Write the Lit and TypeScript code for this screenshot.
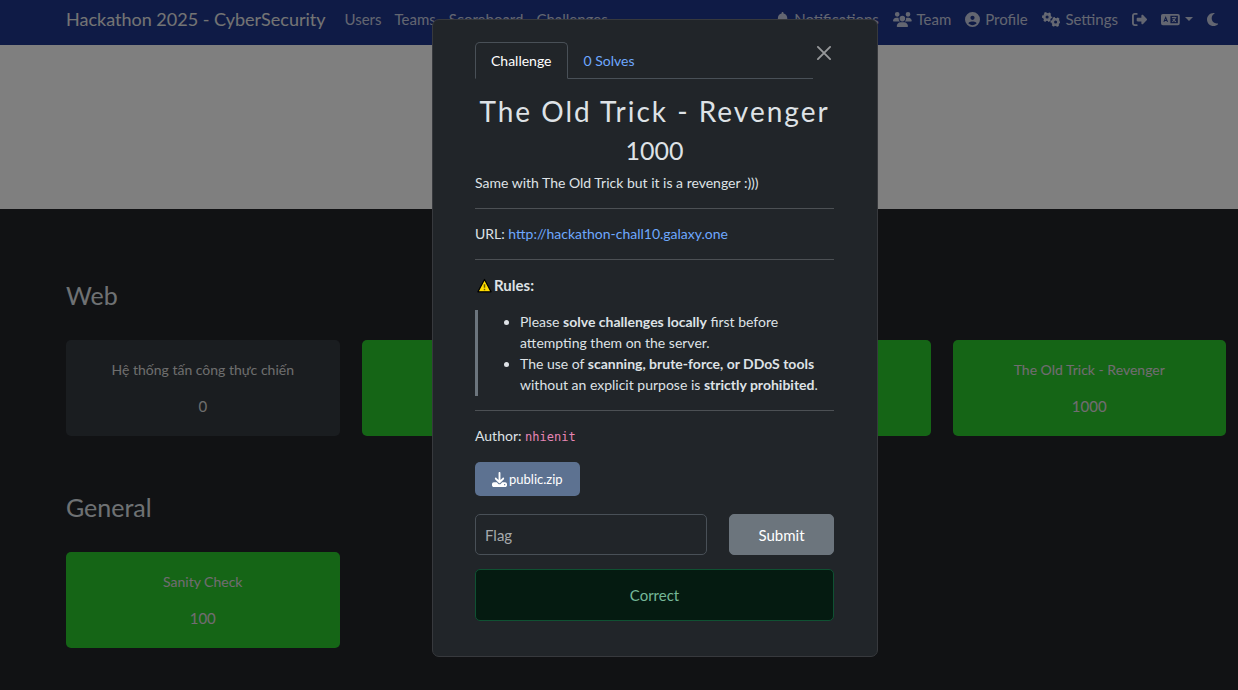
import { LitElement, html, css, svg, nothing } from "lit";
import { customElement, property } from "lit/decorators.js";

type Icon = { w: number; body: unknown };

const gear = (cx: number, cy: number) => svg`
  <circle cx=${cx} cy=${cy} r="95" fill="none" stroke="currentColor" stroke-width="84"></circle>
  <circle cx=${cx} cy=${cy} r="148" fill="none" stroke="currentColor" stroke-width="52"
    pathLength="12" stroke-dasharray="1 1" stroke-dashoffset="0.5"></circle>`;

const ICONS: Record<string, Icon> = {
  bell: {
    w: 448,
    body: svg`<path d="M224 0c-17.7 0-32 14.3-32 32V51.2C119 66 64 130.6 64 208v18.8c0 47-17.3 92.4-48.5 127.6l-7.4 8.3c-8.4 9.4-10.4 22.9-5.3 34.4S19.4 416 32 416H416c12.6 0 24-7.4 29.2-18.9s3.1-25-5.3-34.4l-7.4-8.3C401.3 319.2 384 273.9 384 226.8V208c0-77.4-55-142-128-156.8V32c0-17.7-14.3-32-32-32zm45.3 493.3c12-12 18.7-28.3 18.7-45.3H224 160c0 17 6.7 33.3 18.7 45.3s28.3 18.7 45.3 18.7s33.3-6.7 45.3-18.7z"></path>`,
  },
  users: {
    w: 640,
    body: svg`<path d="M144 0a80 80 0 1 1 0 160A80 80 0 1 1 144 0zM512 0a80 80 0 1 1 0 160A80 80 0 1 1 512 0zM0 298.7C0 239.8 47.8 192 106.7 192h42.7c15.9 0 31 3.5 44.6 9.7c-1.3 7.2-1.9 14.7-1.9 22.3c0 38.2 16.8 72.5 43.3 96c-.2 0-.4 0-.7 0H21.3C9.6 320 0 310.4 0 298.7zM405.3 320c-.2 0-.4 0-.7 0c26.6-23.5 43.3-57.8 43.3-96c0-7.6-.7-15-1.9-22.3c13.6-6.3 28.7-9.7 44.6-9.7h42.7C592.2 192 640 239.8 640 298.7c0 11.8-9.6 21.3-21.3 21.3H405.3zM224 224a96 96 0 1 1 192 0 96 96 0 1 1-192 0zM128 485.3C128 411.7 187.7 352 261.3 352H378.7C452.3 352 512 411.7 512 485.3c0 14.7-11.9 26.7-26.7 26.7H154.7c-14.7 0-26.7-11.9-26.7-26.7z"></path>`,
  },
  profile: {
    w: 512,
    body: svg`<path d="M399 384.2C376.9 345.8 335.4 320 288 320H224c-47.4 0-88.9 25.8-111 64.2c35.2 39.2 86.2 63.8 143 63.8s107.8-24.7 143-63.8zM0 256a256 256 0 1 1 512 0A256 256 0 1 1 0 256zm256 16a72 72 0 1 0 0-144 72 72 0 1 0 0 144z"></path>`,
  },
  gears: { w: 640, body: svg`${gear(174, 172)}${gear(464, 340)}` },
  signout: {
    w: 512,
    body: svg`<path d="M377.9 105.9L500.7 228.7c7.2 7.2 11.3 17.1 11.3 27.3s-4.1 20.1-11.3 27.3L377.9 406.1c-6.4 6.4-15 9.9-24 9.9c-18.7 0-33.9-15.2-33.9-33.9l0-62.1-128 0c-17.7 0-32-14.3-32-32l0-64c0-17.7 14.3-32 32-32l128 0 0-62.1c0-18.7 15.2-33.9 33.9-33.9c9 0 17.6 3.6 24 9.9zM160 96L96 96c-17.7 0-32 14.3-32 32l0 256c0 17.7 14.3 32 32 32l64 0c17.7 0 32 14.3 32 32s-14.3 32-32 32l-64 0c-53 0-96-43-96-96L0 128C0 75 43 32 96 32l64 0c17.7 0 32 14.3 32 32s-14.3 32-32 32z"></path>`,
  },
  language: {
    w: 640,
    body: svg`
      <path fill-rule="evenodd" d="M64 64h512a64 64 0 0 1 64 64v256a64 64 0 0 1-64 64H64a64 64 0 0 1-64-64V128a64 64 0 0 1 64-64zM320 128v256h256V128z"></path>
      <path class="cut" d="M98 336l62-154 62 154M122 292h76"></path>
      <path class="line" d="M372 190h152M448 160v30M492 196c-14 62-52 112-106 138M400 230c22 44 60 82 112 104"></path>`,
  },
  moon: {
    w: 384,
    body: svg`<path d="M223.5 32C100 32 0 132.3 0 256S100 480 223.5 480c60.6 0 115.5-24.2 155.8-63.4c5-4.9 6.3-12.5 3.1-18.7s-10.1-9.7-17-8.5c-9.8 1.7-19.8 2.6-30.1 2.6c-96.9 0-175.5-78.8-175.5-176c0-65.8 36-123.1 89.3-153.3c6.1-3.5 9.2-10.5 7.7-17.3s-7.3-11.9-14.3-12.5c-6.3-.5-12.6-.8-19-.8z"></path>`,
  },
  download: {
    w: 512,
    body: svg`<path d="M288 32c0-17.7-14.3-32-32-32s-32 14.3-32 32V274.7l-73.4-73.4c-12.5-12.5-32.8-12.5-45.3 0s-12.5 32.8 0 45.3l128 128c12.5 12.5 32.8 12.5 45.3 0l128-128c12.5-12.5 12.5-32.8 0-45.3s-32.8-12.5-45.3 0L288 274.7V32zM64 352c-35.3 0-64 28.7-64 64v32c0 35.3 28.7 64 64 64H448c35.3 0 64-28.7 64-64V416c0-35.3-28.7-64-64-64H346.5l-45.3 45.3c-25 25-65.5 25-90.5 0L165.5 352H64zm368 56a24 24 0 1 1 0 48 24 24 0 1 1 0-48z"></path>`,
  },
  warning: {
    w: 512,
    body: svg`
      <path d="M256 50L480 470H32z" fill="#ffdd00" stroke="#000" stroke-width="44" stroke-linejoin="round"></path>
      <path d="M256 210v120M256 370v50" fill="none" stroke="#6b5c00" stroke-width="52"></path>`,
  },
};

@customElement("ui-icon")
class UiIcon extends LitElement {
  static styles = css`
    :host { display: inline-flex; }
    svg { display: block; height: 15px; fill: currentColor; }
    .cut { fill: none; stroke: var(--icon-cut, #1f378d); stroke-width: 36; }
    .line { fill: none; stroke: currentColor; stroke-width: 36; }
  `;
  @property() name = "bell";
  render() {
    const icon = ICONS[this.name];
    return html`<svg viewBox="0 0 ${icon.w} 512" aria-hidden="true">${icon.body}</svg>`;
  }
}

@customElement("nav-bar")
class NavBar extends LitElement {
  static styles = css`
    :host { display: block; background: #1f378d; }
    nav {
      display: flex; align-items: center; height: 45px; box-sizing: border-box;
      padding: 0 20px 7px 66px; white-space: nowrap;
    }
    a, button {
      color: rgba(255, 255, 255, 0.75); text-decoration: none; font: inherit;
      background: none; border: 0; padding: 0;
      display: inline-flex; align-items: center; gap: 5px;
    }
    .brand { font-size: 18px; color: #e8e8e8; margin-right: 19px; }
    .links { display: flex; align-items: center; gap: 13px; }
    .tools { display: flex; align-items: center; gap: 14px; margin-left: auto; }
    .caret { border: 4px solid transparent; border-top-color: currentColor; border-bottom: 0; }
  `;
  render() {
    return html`<nav>
      <a class="brand" href="#">Hackathon 2025 - CyberSecurity</a>
      <div class="links">
        ${["Users", "Teams", "Scoreboard", "Challenges"].map((t) => html`<a href="#">${t}</a>`)}
      </div>
      <div class="tools">
        ${[
          ["bell", "Notifications"],
          ["users", "Team"],
          ["profile", "Profile"],
          ["gears", "Settings"],
        ].map(([icon, t]) => html`<a href="#"><ui-icon name=${icon}></ui-icon>${t}</a>`)}
        <a href="#" aria-label="Logout"><ui-icon name="signout"></ui-icon></a>
        <button aria-label="Language"><ui-icon name="language"></ui-icon><span class="caret"></span></button>
        <button aria-label="Theme"><ui-icon name="moon"></ui-icon></button>
      </div>
    </nav>`;
  }
}

type Challenge = { name?: string; value?: number; solved: boolean };

const CATEGORIES: { title: string; items: Challenge[] }[] = [
  {
    title: "Web",
    items: [
      { name: "Hệ thống tấn công thực chiến", value: 0, solved: false },
      { solved: true },
      { solved: true },
      { name: "The Old Trick - Revenger", value: 1000, solved: true },
    ],
  },
  { title: "General", items: [{ name: "Sanity Check", value: 100, solved: true }] },
];

@customElement("challenge-board")
class ChallengeBoard extends LitElement {
  static styles = css`
    :host { display: block; padding: 71px 12px 0 66px; }
    section { margin-bottom: 56px; }
    h3 { margin: 0 0 29px; font-size: 25px; line-height: 31px; font-weight: 400; color: #dee2e6; }
    .grid { display: grid; grid-template-columns: repeat(4, 1fr); gap: 22px; }
    button {
      font: inherit; color: #dcdcdc; border: 0; border-radius: 5px; background: #343a40;
      padding: 19px 14px; display: flex; flex-direction: column; align-items: center; gap: 14px;
    }
    .solved { background: #2acb2c; color: #e2d8e2; }
    .name { font-size: 14px; }
  `;
  render() {
    return CATEGORIES.map(
      (c) => html`<section>
        <h3>${c.title}</h3>
        <div class="grid">
          ${c.items.map(
            (i) => html`<button class=${i.solved ? "solved" : ""}>
              ${i.name ? html`<span class="name">${i.name}</span><span>${i.value}</span>` : nothing}
            </button>`
          )}
        </div>
      </section>`
    );
  }
}

@customElement("challenge-dialog")
class ChallengeDialog extends LitElement {
  static styles = css`
    :host {
      display: block; box-sizing: border-box; width: 446px; padding: 22px 43px 35px 42px;
      background: #212529; border: 1px solid #37393d; border-radius: 7px; color: #dee2e6;
    }
    a { color: #6ea8fe; text-decoration: none; }
    button { font: inherit; cursor: pointer; }
    header { display: flex; align-items: flex-start; }
    .tabs { flex: 1; display: flex; border-bottom: 1px solid #495057; }
    .tabs button {
      background: none; border: 1px solid transparent; border-radius: 5px 5px 0 0; font-size: 14px;
      padding: 7px 15px 6px; margin-bottom: -1px; color: #6ea8fe;
    }
    .tabs .active { color: #fff; background: #212529; border-color: #495057 #495057 #212529; }
    .close { border: 0; background: none; padding: 3px 2px 3px 3px; color: #97999b; display: flex; }
    .close svg { width: 16px; height: 16px; fill: none; stroke: currentColor; stroke-width: 2; }
    h2, h3 { margin: 0; text-align: center; font-weight: 400; }
    h2 { font-size: 28px; line-height: 35px; letter-spacing: 2px; margin: 15px 0 6px; white-space: nowrap; }
    h3 { font-size: 25px; line-height: 30px; margin-bottom: 7px; }
    p { margin: 0; font-size: 14px; }
    hr { border: 0; border-top: 1px solid #4c5054; margin: 14px 0; }
    .rules { display: flex; align-items: center; font-size: 15px; font-weight: 700; padding-left: 2px; gap: 2px; }
    blockquote { margin: 14px 0; border-left: 3px solid #6c757d; padding: 1px 0 1px 13px; font-size: 14px; line-height: 21px; }
    ul { margin: 0; padding-left: 29px; }
    code { font-family: "DejaVu Sans Mono", monospace; font-size: 12px; color: #e685b5; }
    .file {
      display: flex; width: fit-content; align-items: center; gap: 2px; margin: 14px 0 18px; padding: 6px 17px;
      font-size: 13px; color: #fff; background: #5d7291; border-radius: 5px;
    }
    form { display: flex; gap: 22px; margin-bottom: 14px; }
    input {
      flex: 1; min-width: 0; box-sizing: border-box; height: 41px; padding: 0 9px; font: inherit;
      color: #dee2e6; background: #212529; border: 1px solid #495057; border-radius: 5px;
    }
    input::placeholder { color: #a6a9ac; opacity: 1; }
    .submit { width: 105px; color: #fff; background: #6c757d; border: 1px solid #6c757d; border-radius: 5px; padding: 0; }
    .alert {
      text-align: center; padding: 14px; color: #75b798; background: #051b11;
      border: 1px solid #0f5132; border-radius: 5px;
    }
  `;
  render() {
    return html`
      <header>
        <div class="tabs" role="tablist">
          <button class="active" role="tab" aria-selected="true">Challenge</button>
          <button role="tab" aria-selected="false">0 Solves</button>
        </div>
        <button class="close" aria-label="Close">
          <svg viewBox="0 0 17 17"><path d="M2 2L15 15M15 2L2 15" stroke-linecap="round"></path></svg>
        </button>
      </header>
      <h2>The Old Trick - Revenger</h2>
      <h3>1000</h3>
      <p>Same with The Old Trick but it is a revenger :)))</p>
      <hr />
      <p>URL: <a href="#">http://hackathon-chall10.galaxy.one</a></p>
      <hr />
      <p class="rules"><ui-icon name="warning"></ui-icon>Rules:</p>
      <blockquote>
        <ul>
          <li>Please <b>solve challenges locally</b> first before attempting them on the server.</li>
          <li>The use of <b>scanning, brute-force, or DDoS tools</b> without an explicit purpose is <b>strictly prohibited</b>.</li>
        </ul>
      </blockquote>
      <hr />
      <p>Author: <code>nhienit</code></p>
      <a class="file" href="#"><ui-icon name="download"></ui-icon>public.zip</a>
      <form @submit=${(e: Event) => e.preventDefault()}>
        <input type="text" placeholder="Flag" aria-label="Flag" />
        <button class="submit">Submit</button>
      </form>
      <div class="alert" role="alert">Correct</div>
    `;
  }
}

@customElement("app-root")
class AppRoot extends LitElement {
  static styles = css`
    :host {
      display: block; min-height: 100vh; background: #222428;
      font-family: Lato, "Open Sans", sans-serif; font-size: 15px; line-height: 22px;
    }
    .page { height: 100vh; overflow: hidden; }
    .hero { height: 164px; background: #fff; }
    .backdrop {
      position: fixed; inset: 0; background: rgba(0, 0, 0, 0.5);
      display: flex; justify-content: center; align-items: flex-start;
      padding: 19px 0 0 72px;
    }
  `;
  render() {
    return html`
      <div class="page">
        <nav-bar></nav-bar>
        <div class="hero"></div>
        <challenge-board></challenge-board>
      </div>
      <div class="backdrop">
        <challenge-dialog role="dialog" aria-modal="true" aria-label="Challenge"></challenge-dialog>
      </div>
    `;
  }
}
